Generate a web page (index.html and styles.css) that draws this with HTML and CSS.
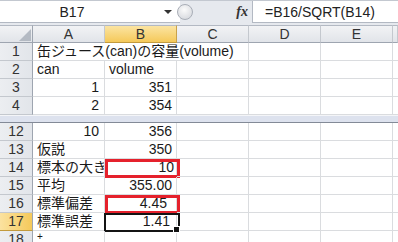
FILE: index.html
```html
<!DOCTYPE html>
<html lang="ja">
<head>
    <meta charset="UTF-8">
    <title>缶ジュースの容量</title>
    <link rel="stylesheet" href="styles.css">
</head>
<body>

<div class="formula-bar">
    <div class="name-box">
        <span class="name">B17</span>
        <span class="arrow"></span>
    </div>
    <div class="splitter"></div>
    <div class="fx">fx</div>
    <div class="formula">=B16/SQRT(B14)</div>
</div>

<div class="sheet">
    <div class="row head">
        <div class="corner">
            <svg width="12" height="12" viewBox="0 0 12 12"><polygon points="12,0 12,12 0,12" fill="#b4bac3"/></svg>
        </div>
        <div class="col">A</div>
        <div class="col sel">B</div>
        <div class="col">C</div>
        <div class="col">D</div>
        <div class="col">E</div>
        <div class="col"></div>
    </div>

    <div class="row">
        <div class="rh">1</div>
        <div class="cell wide">缶ジュース(can)の容量(volume)</div>
        <div class="cell"></div>
        <div class="cell"></div>
        <div class="cell"></div>
    </div>
    <div class="row">
        <div class="rh">2</div>
        <div class="cell">can</div>
        <div class="cell">volume</div>
        <div class="cell"></div>
        <div class="cell"></div>
        <div class="cell"></div>
        <div class="cell"></div>
    </div>
    <div class="row">
        <div class="rh">3</div>
        <div class="cell num a">1</div>
        <div class="cell num">351</div>
        <div class="cell"></div>
        <div class="cell"></div>
        <div class="cell"></div>
        <div class="cell"></div>
    </div>
    <div class="row">
        <div class="rh">4</div>
        <div class="cell num a">2</div>
        <div class="cell num">354</div>
        <div class="cell"></div>
        <div class="cell"></div>
        <div class="cell"></div>
        <div class="cell"></div>
    </div>

    <div class="split"></div>

    <div class="row">
        <div class="rh">12</div>
        <div class="cell num a">10</div>
        <div class="cell num">356</div>
        <div class="cell"></div>
        <div class="cell"></div>
        <div class="cell"></div>
        <div class="cell"></div>
    </div>
    <div class="row">
        <div class="rh">13</div>
        <div class="cell">仮説</div>
        <div class="cell num">350</div>
        <div class="cell"></div>
        <div class="cell"></div>
        <div class="cell"></div>
        <div class="cell"></div>
    </div>
    <div class="row">
        <div class="rh">14</div>
        <div class="cell clip">標本の大きさ</div>
        <div class="cell num mark n14">10</div>
        <div class="cell"></div>
        <div class="cell"></div>
        <div class="cell"></div>
        <div class="cell"></div>
    </div>
    <div class="row">
        <div class="rh">15</div>
        <div class="cell">平均</div>
        <div class="cell num">355.00</div>
        <div class="cell"></div>
        <div class="cell"></div>
        <div class="cell"></div>
        <div class="cell"></div>
    </div>
    <div class="row">
        <div class="rh">16</div>
        <div class="cell">標準偏差</div>
        <div class="cell num mark n16">4.45</div>
        <div class="cell"></div>
        <div class="cell"></div>
        <div class="cell"></div>
        <div class="cell"></div>
    </div>
    <div class="row">
        <div class="rh sel">17</div>
        <div class="cell">標準誤差</div>
        <div class="cell num active">1.41<span class="handle"></span></div>
        <div class="cell"></div>
        <div class="cell"></div>
        <div class="cell"></div>
        <div class="cell"></div>
    </div>
    <div class="row">
        <div class="rh">18</div>
        <div class="cell"><span class="cursor">+</span></div>
        <div class="cell"></div>
        <div class="cell"></div>
        <div class="cell"></div>
        <div class="cell"></div>
        <div class="cell"></div>
    </div>
</div>

</body>
</html>
```

FILE: styles.css
```css
body {
    margin: 0;
    width: 398px;
    height: 242px;
    overflow: hidden;
    background-color: #e6e9ee;
    font-family: "Liberation Sans", "Noto Sans CJK JP", sans-serif;
    font-size: 14px;
    color: #1a1a1a;
}

/* formula bar */
.formula-bar {
    display: flex;
    height: 23px;
    box-sizing: border-box;
    border-top: 1px solid #c3c8d0;
}
.name-box {
    width: 180px;
    background-color: #fff;
    border-bottom: 1px solid #b3b9c3;
    display: flex;
    align-items: center;
}
.name {
    flex: 1;
    text-align: center;
    padding-right: 20px;
    color: #222;
}
.arrow {
    width: 0;
    height: 0;
    border-left: 4px solid transparent;
    border-right: 4px solid transparent;
    border-top: 4px solid #333;
    margin-right: 8px;
}
.splitter {
    width: 16px;
    height: 16px;
    margin-left: -3px;
    align-self: center;
    border-radius: 50%;
    border: 1px solid #a9aeb7;
    box-sizing: border-box;
    background: radial-gradient(circle at 45% 35%, #fbfbfb, #cfd2d8);
}
.fx {
    width: 59px;
    text-align: right;
    padding-right: 4px;
    box-sizing: border-box;
    font-family: "Liberation Serif", serif;
    font-style: italic;
    font-weight: bold;
    font-size: 14px;
    line-height: 21px;
    color: #333;
}
.formula {
    flex: 1;
    background-color: #fff;
    border-left: 1px solid #b3b9c3;
    border-bottom: 1px solid #b3b9c3;
    padding-left: 12px;
    line-height: 22px;
    white-space: nowrap;
    color: #222;
}

/* sheet */
.sheet {
    margin-top: 2px;
    background-color: #fff;
}
.row {
    display: grid;
    grid-template-columns: 33px 72px 72px 72px 72px 72px 1fr;
    height: 18px;
}
.corner, .col {
    background: linear-gradient(#f2f3f5, #e1e4e9);
    border-top: 1px solid #b3b9c3;
    border-right: 1px solid #c4c8ce;
    border-bottom: 1px solid #9ea5b0;
    box-sizing: border-box;
    text-align: center;
    line-height: 16px;
    color: #333;
}
.corner {
    display: flex;
    align-items: flex-end;
    justify-content: flex-end;
    padding: 0 1px 1px 0;
    border-right-color: #9ea5b0;
}
.col.sel {
    background: linear-gradient(#fbe4a2, #f5c95a);
    border-right-color: #c9a24a;
    border-bottom-color: #c29a3d;
}
.rh {
    background: linear-gradient(90deg, #eceef1, #e2e5ea);
    border-right: 1px solid #9ea5b0;
    border-bottom: 1px solid #c4c8ce;
    box-sizing: border-box;
    text-align: center;
    line-height: 17px;
    color: #333;
}
.rh.sel {
    background: linear-gradient(90deg, #fbe2a0, #f5c95a);
    border-bottom-color: #c29a3d;
}
.cell {
    position: relative;
    border-right: 1px solid #dadcdf;
    border-bottom: 1px solid #dadcdf;
    box-sizing: border-box;
    line-height: 17px;
    padding: 0 4px;
    white-space: nowrap;
}
.cell.wide {
    grid-column: span 3;
}
.cell.clip {
    overflow: hidden;
    padding-right: 0;
}
.num {
    text-align: right;
}
.num.a {
    padding-right: 5px;
}
.split {
    height: 8px;
    box-sizing: border-box;
    background-color: #dde2ee;
    border-top: 1px solid #f4f5f8;
    border-bottom: 1px solid #838a97;
}

/* marked cells */
.mark::after {
    content: "";
    position: absolute;
    left: 0;
    top: 0;
    width: 75px;
    height: 19px;
    border: 3px solid #e5212c;
    box-sizing: border-box;
}
.n14 {
    padding-right: 2px;
}
.n16 {
    padding-right: 9px;
}
.active::after {
    content: "";
    position: absolute;
    left: -1px;
    top: 0;
    width: 76px;
    height: 19px;
    border: 2px solid #141414;
    box-sizing: border-box;
}
.active {
    padding-right: 6px;
}
.handle {
    position: absolute;
    right: -4px;
    bottom: -3px;
    width: 5px;
    height: 5px;
    background-color: #111;
    border: 1px solid #fff;
    z-index: 2;
}
.cursor {
    display: block;
    font-size: 10px;
    line-height: 10px;
    margin-top: 1px;
}
```
